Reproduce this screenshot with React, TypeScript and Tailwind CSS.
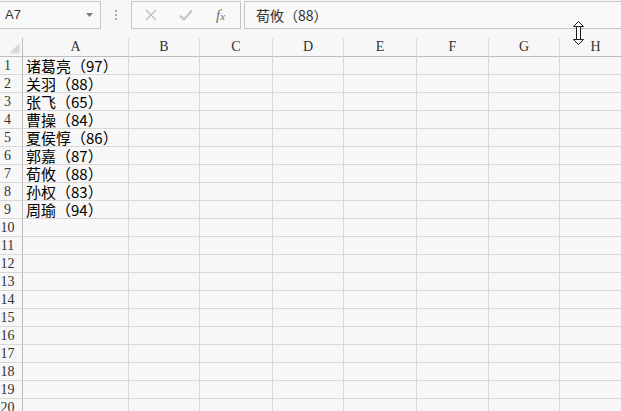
import React from "react";

const cols = ["A", "B", "C", "D", "E", "F", "G", "H"];
const widths = [106, 71, 73, 71, 73, 72, 71, 72];
const data = [
  "诸葛亮（97）",
  "关羽（88）",
  "张飞（65）",
  "曹操（84）",
  "夏侯惇（86）",
  "郭嘉（87）",
  "荀攸（88）",
  "孙权（83）",
  "周瑜（94）",
];
const rows = Array.from({ length: 20 }, (_, i) => i + 1);

const cjk = { fontFamily: '"Noto Sans CJK SC", "Noto Sans", sans-serif' };
const serif = { fontFamily: '"Liberation Serif", "Times New Roman", serif' };

export default function App() {
  return (
    <div className="relative w-[621px] h-[411px] overflow-hidden bg-[#f7f7f7] select-none">
      {/* formula bar */}
      <div className="flex h-[29px] pt-[1px]">
        <div className="flex items-center w-[101px] h-[28px] border border-l-0 border-[#c6c6c6] bg-[#f9f9f9]">
          <span
            className="pl-[5px] text-[13px] text-[#333] flex-1"
            style={{ fontFamily: '"Liberation Sans", Arial, sans-serif' }}
          >
            A7
          </span>
          <svg width="8" height="5" viewBox="0 0 8 5" className="mr-[6px]">
            <path d="M0 0 H7 L3.5 4 Z" fill="#7b7b7b" />
          </svg>
        </div>
        <div className="w-[30px] flex flex-col items-center justify-center gap-[2px] pb-[1px]">
          <div className="w-[2px] h-[2px] bg-[#a9a9a9]" />
          <div className="w-[2px] h-[2px] bg-[#a9a9a9]" />
          <div className="w-[2px] h-[2px] bg-[#a9a9a9]" />
        </div>
        <div className="flex items-center w-[110px] h-[28px] border border-[#c6c6c6] bg-[#f9f9f9]">
          <svg width="12" height="12" viewBox="0 0 12 12" className="ml-[13px]">
            <path d="M1 1 L11 11 M11 1 L1 11" stroke="#bdbdbd" strokeWidth="1.3" />
          </svg>
          <svg width="14" height="12" viewBox="0 0 14 12" className="ml-[22px]">
            <path d="M1 6.5 L5 10.5 L13 1.5" stroke="#c2c2c2" strokeWidth="2" fill="none" />
          </svg>
          <span className="ml-[23px] italic text-[#6b6b6b] leading-none" style={serif}>
            <span className="text-[15px]">f</span>
            <span className="text-[11px]">x</span>
          </span>
        </div>
        <div className="flex items-center ml-[3px] flex-1 h-[28px] border border-r-0 border-[#c6c6c6] bg-[#f9f9f9]">
          <span
            className="pl-[11px] text-[14px] text-[#333] leading-none [text-spacing-trim:space-all]"
            style={cjk}
          >
            荀攸（88）
          </span>
        </div>
      </div>
      <div className="h-[9px]" />

      {/* grid */}
      <div
        className="grid"
        style={{ gridTemplateColumns: `23px ${widths.map((w) => `${w}px`).join(" ")}` }}
      >
        {/* header row */}
        <div className="relative h-[19px] border-b border-r border-[#bdbdbd]">
          <svg width="11" height="11" viewBox="0 0 11 11" className="absolute left-[9px] top-[5px]">
            <path d="M10.5 0 V10.5 H0 Z" fill="#d9d9d9" />
          </svg>
        </div>
        {cols.map((c) => (
          <div
            key={c}
            className="h-[19px] border-b border-r border-b-[#bdbdbd] border-r-[#dedede] flex items-end justify-center pb-[1px] text-[14px] text-[#333] leading-[16px]"
            style={serif}
          >
            {c}
          </div>
        ))}

        {rows.map((r) => (
          <React.Fragment key={r}>
            <div
              className="h-[18px] border-r border-b border-r-[#bdbdbd] border-b-[#d8d8d8] text-[14px] text-[#333] leading-[17px]"
              style={serif}
            >
              <div className="w-[15px] flex justify-center whitespace-nowrap">{r}</div>
            </div>
            {cols.map((c, ci) => (
              <div
                key={c}
                className="h-[18px] border-r border-b border-[#d8d8d8] whitespace-nowrap"
              >
                {ci === 0 && data[r - 1] ? (
                  <div
                    className="pl-[3px] h-[17px] text-[15px] text-black leading-[17px] [text-spacing-trim:space-all]"
                    style={cjk}
                  >
                    {data[r - 1]}
                  </div>
                ) : null}
              </div>
            ))}
          </React.Fragment>
        ))}
      </div>

      {/* cursor overlay */}
      <svg
        width="12"
        height="25"
        viewBox="0 0 12 25"
        className="absolute left-[573px] top-[21px]"
      >
        <path
          d="M5.5 0.5 L10.5 5.5 L7.5 5.5 L7.5 18.5 L10.5 18.5 L5.5 23.5 L0.5 18.5 L3.5 18.5 L3.5 5.5 L0.5 5.5 Z"
          fill="#ffffff"
          stroke="#1a1a1a"
          strokeWidth="1"
          strokeLinejoin="miter"
        />
        <path d="M3.5 5.5 H7.5 M3.5 18.5 H7.5" stroke="#1a1a1a" strokeWidth="1" />
      </svg>
    </div>
  );
}
